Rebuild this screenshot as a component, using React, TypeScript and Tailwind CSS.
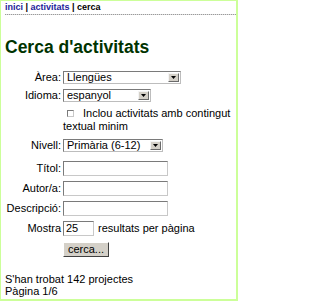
import React from "react";

function Arrow() {
  return (
    <div className="flex h-full w-[11px] items-center justify-center border border-t-[#f4f4f4] border-l-[#f4f4f4] border-r-[#6a6a6a] border-b-[#6a6a6a] bg-[#d4d0c8]">
      <svg width="5" height="3" viewBox="0 0 5 3">
        <path d="M0 0H5L2.5 3Z" fill="#000" />
      </svg>
    </div>
  );
}

function Select({ text, className }: { text: string; className: string }) {
  return (
    <div
      className={
        "flex h-[13px] items-stretch border border-t-[#7a7a7a] border-l-[#7a7a7a] border-r-[#bdbdbd] border-b-[#bdbdbd] bg-white p-[1px] " +
        className
      }
    >
      <div className="flex flex-1 items-center pl-[2px] leading-none">{text}</div>
      <Arrow />
    </div>
  );
}

function Input({ className, value }: { className: string; value?: string }) {
  return (
    <div
      className={
        "flex h-[15px] items-center border border-t-[#7a7a7a] border-l-[#7a7a7a] border-r-[#c8c8c8] border-b-[#c8c8c8] bg-white pl-[2px] leading-none " +
        className
      }
    >
      {value}
    </div>
  );
}

function Row({
  label,
  className,
  children,
}: {
  label: string;
  className: string;
  children: React.ReactNode;
}) {
  return (
    <div className={"flex items-center " + className}>
      <div className="w-[56px] text-right leading-none">{label}</div>
      <div className="ml-[2px] flex items-center">{children}</div>
    </div>
  );
}

export default function App() {
  return (
    <div className="h-[301px] w-[238px] border-t border-l border-r-2 border-b-2 border-[#ccff99] bg-white font-['Liberation_Sans',Arial,sans-serif] text-[11px] text-black">
      <div className="ml-[4px]">
        <div className="h-[13px] pt-[1px] text-[9px] font-bold leading-[11px]">
          <span className="text-[#23239a]">inici</span>
          <span> | </span>
          <span className="text-[#23239a]">activitats</span>
          <span> | cerca</span>
        </div>
        <div className="h-[1px] bg-[repeating-linear-gradient(90deg,#9a9a9a_0px,#9a9a9a_1px,#dcdcdc_1px,#dcdcdc_2px)]" />
      </div>
      <div className="px-[4px]">
        <h1 className="mt-[22px] text-[17.5px] font-bold leading-[21px] text-[#003300]">
          Cerca d'activitats
        </h1>

        <Row label="Àrea:" className="mt-[13px] h-[13px]">
          <Select text="Llengües" className="w-[118px]" />
        </Row>
        <Row label="Idioma:" className="mt-[5px] h-[13px]">
          <Select text="espanyol" className="w-[88px]" />
        </Row>
        <div className="mt-[5px] ml-[58px] leading-[13px]">
          <span className="ml-[4px] mr-[9px] inline-block h-[7px] w-[7px] border border-t-[#7a7a7a] border-l-[#7a7a7a] border-r-[#c8c8c8] border-b-[#c8c8c8] bg-white" />
          Inclou activitats amb contingut textual minim
        </div>
        <Row label="Nivell:" className="mt-[6px] h-[13px]">
          <Select text="Primària (6-12)" className="w-[100px]" />
        </Row>
        <Row label="Títol:" className="mt-[9px] h-[15px]">
          <Input className="w-[105px]" />
        </Row>
        <Row label="Autor/a:" className="mt-[5px] h-[15px]">
          <Input className="w-[105px]" />
        </Row>
        <Row label="Descripció:" className="mt-[5px] h-[15px]">
          <Input className="w-[105px]" />
        </Row>
        <Row label="Mostra" className="mt-[5px] h-[15px]">
          <Input className="w-[31px]" value="25" />
          <span className="ml-[4px] leading-none">resultats per pàgina</span>
        </Row>
        <div className="mt-[6px] ml-[58px] flex">
          <div className="flex h-[15px] w-[46px] items-center justify-center border border-t-[#ffffff] border-l-[#ffffff] border-r-[#404040] border-b-[#404040] bg-[#d4d0c8] leading-none">
            cerca...
          </div>
        </div>
        <div className="mt-[16px] leading-[12px]">
          <div>S'han trobat 142 projectes</div>
          <div>Pàgina 1/6</div>
        </div>
      </div>
    </div>
  );
}
